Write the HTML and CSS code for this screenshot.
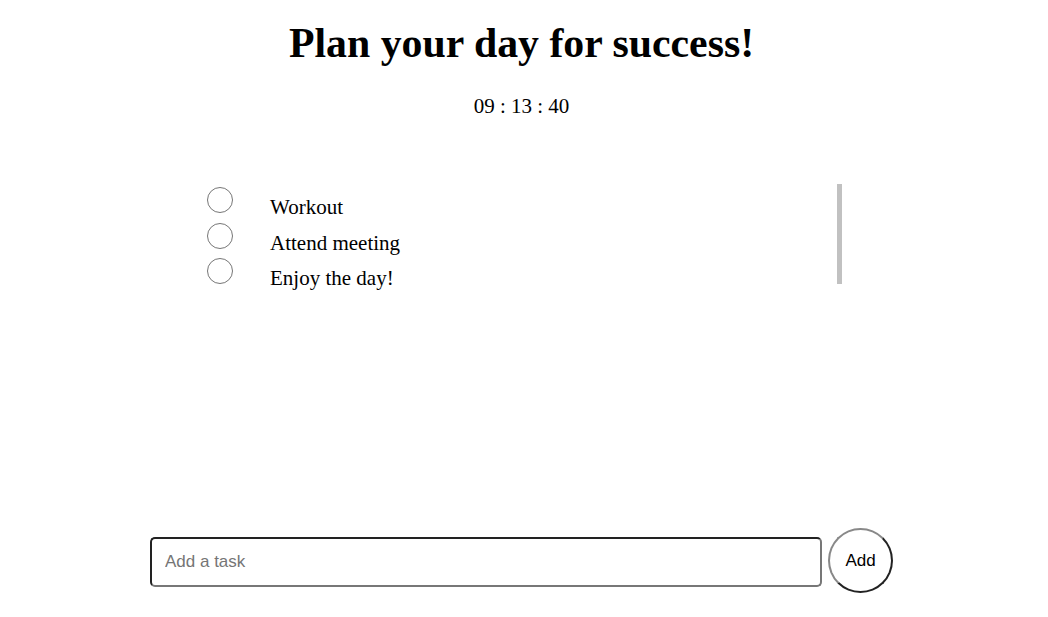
FILE: index.html
```html
<!DOCTYPE html>
<html lang="en">
<head>
<meta charset="utf-8">
<title>Plan your day</title>
<link rel="stylesheet" href="styles.css">
</head>
<body>
<main class="app">
  <h1 class="title">Plan your day for success!</h1>
  <div class="clock">09 : 13 : 40</div>
  <ul class="tasks">
    <li class="task"><span class="check"></span><span class="label">Workout</span></li>
    <li class="task"><span class="check"></span><span class="label">Attend meeting</span></li>
    <li class="task"><span class="check"></span><span class="label">Enjoy the day!</span></li>
  </ul>
  <form class="add-form">
    <input class="add-input" type="text" placeholder="Add a task">
    <button class="add-btn" type="button">Add</button>
  </form>
</main>
</body>
</html>
```
FILE: styles.css
```css
html, body {
  margin: 0;
  padding: 0;
  background: #fff;
}
body {
  font-family: "Liberation Serif", "Times New Roman", serif;
  color: #000;
}
.app {
  width: 743px;
  margin-left: 150px;
  display: flex;
  flex-direction: column;
}
.title {
  margin: 20px 0 0;
  font-size: 41.8px;
  font-weight: bold;
  line-height: 46px;
  text-align: center;
}
.clock {
  margin-top: 29px;
  font-size: 21px;
  line-height: 22px;
  text-align: center;
}
.tasks {
  list-style: none;
  margin: 67px 0 0;
  padding: 3px 0 0 57px;
  width: 630px;
  height: 97px;
  border-right: 5px solid #c1c1c1;
}
.task {
  display: flex;
  align-items: flex-start;
  height: 35.5px;
}
.check {
  width: 24px;
  height: 24px;
  border: 1px solid #767676;
  border-radius: 50%;
  flex: none;
}
.label {
  margin-left: 37px;
  margin-top: 7px;
  font-size: 21px;
  line-height: 26px;
}
.add-form {
  margin: 244px 0 0;
  display: flex;
  align-items: flex-start;
  gap: 6px;
}
.add-input {
  box-sizing: border-box;
  width: 672px;
  height: 50px;
  margin-top: 9px;
  border: 2px solid;
  border-color: #222 #777 #777 #222;
  border-radius: 5px;
  padding: 0 13px;
  font-family: "Liberation Sans", Arial, sans-serif;
  font-size: 17px;
  color: #000;
  outline: none;
}
.add-input::placeholder {
  color: #757575;
}
.add-btn {
  box-sizing: border-box;
  width: 65px;
  height: 65px;
  border-radius: 50%;
  border: 2px solid;
  border-color: #888 #222 #222 #888;
  background: #fff;
  font-family: "Liberation Sans", Arial, sans-serif;
  font-size: 17px;
  color: #000;
  padding: 0;
}
```
